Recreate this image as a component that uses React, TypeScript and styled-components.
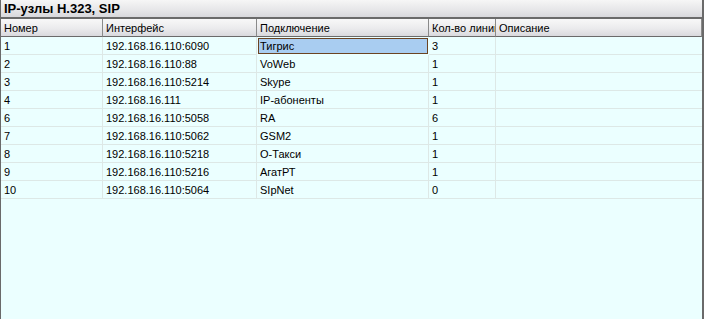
import React from 'react'
import styled, { createGlobalStyle } from 'styled-components'

const GlobalStyle = createGlobalStyle`
  html, body {
    margin: 0;
    padding: 0;
    background: #ebffff;
  }
  body {
    font-family: "Liberation Sans", Arial, sans-serif;
  }
`

const Panel = styled.div`
  width: 704px;
  height: 319px;
  box-sizing: border-box;
  border-left: 1px solid #6a6a6a;
  border-right: 2px solid #6a6a6a;
  background: #ebffff;
  display: flex;
  flex-direction: column;
  overflow: hidden;
`

const TitleBar = styled.div`
  height: 17px;
  flex: none;
  display: flex;
  align-items: center;
  padding-left: 3px;
  background: linear-gradient(#f6f6f6, #e6e6e8 60%, #d8d8dc);
  border-bottom: 2px solid #6a6a6a;
  font-family: "Liberation Sans", Arial, sans-serif;
  font-weight: bold;
  font-size: 13px;
  color: #000;
`

const Grid = styled.div`
  display: grid;
  grid-template-columns: 102px 154px 172px 67px 1fr;
`

const HeaderCell = styled.div`
  height: 18px;
  box-sizing: border-box;
  display: flex;
  align-items: center;
  padding-left: 3px;
  white-space: nowrap;
  overflow: hidden;
  background: linear-gradient(#f8f8f8, #ebebed 55%, #d9d9dd);
  border-right: 1px solid #8a8a8a;
  border-bottom: 1px solid #6a6a6a;
  font-family: "Liberation Sans", Arial, sans-serif;
  font-size: 11px;
  color: #000;

  &:last-child {
    border-right: none;
  }
`

const Cell = styled.div<{ $selected?: boolean }>`
  height: 18px;
  box-sizing: border-box;
  display: flex;
  align-items: center;
  padding-left: 3px;
  white-space: nowrap;
  overflow: hidden;
  border-right: 1px solid #dde8e6;
  border-bottom: 1px solid #dde8e6;
  font-family: "Liberation Sans", Arial, sans-serif;
  font-size: 11px;
  color: #000;
  background: #ebffff;

  &:nth-child(5n) {
    border-right: none;
  }

  ${p => p.$selected && `
    background: #a9cdf1;
    box-shadow: inset 0 0 0 1px #6b4322;
    margin: 1px;
    height: 16px;
    border-bottom: none;
    border-right: none;
    padding-left: 2px;
  `}
`

const columns = ['Номер', 'Интерфейс', 'Подключение', 'Кол-во линий', 'Описание']

const rows = [
  ['1', '192.168.16.110:6090', 'Тигрис', '3', ''],
  ['2', '192.168.16.110:88', 'VoWeb', '1', ''],
  ['3', '192.168.16.110:5214', 'Skype', '1', ''],
  ['4', '192.168.16.111', 'IP-абоненты', '1', ''],
  ['6', '192.168.16.110:5058', 'RA', '6', ''],
  ['7', '192.168.16.110:5062', 'GSM2', '1', ''],
  ['8', '192.168.16.110:5218', 'О-Такси', '1', ''],
  ['9', '192.168.16.110:5216', 'АгатРТ', '1', ''],
  ['10', '192.168.16.110:5064', 'SIpNet', '0', ''],
]

export default function App() {
  return (
    <>
      <GlobalStyle />
      <Panel>
        <TitleBar>IP-узлы H.323, SIP</TitleBar>
        <Grid>
          {columns.map(c => (
            <HeaderCell key={c}>{c}</HeaderCell>
          ))}
          {rows.map((r, i) =>
            r.map((v, j) => (
              <Cell key={`${i}-${j}`} $selected={i === 0 && j === 2}>
                {v}
              </Cell>
            ))
          )}
        </Grid>
      </Panel>
    </>
  )
}
